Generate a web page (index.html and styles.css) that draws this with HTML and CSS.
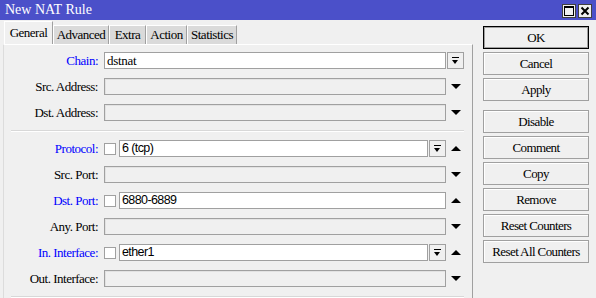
FILE: index.html
```html
<!DOCTYPE html>
<html lang="en">

<head>
    <meta charset="UTF-8">
    <title>New NAT Rule</title>
    <link rel="stylesheet" href="styles.css">
</head>

<body>
    <div class="window">
        <div class="titlebar">
            <span class="title">New NAT Rule</span>
            <div class="title-buttons">
                <span class="tbtn">
                    <svg width="12" height="12" viewBox="0 0 12 12"><rect x="1.5" y="1.5" width="9" height="9" fill="none" stroke="#000" stroke-width="1"/><rect x="1" y="1" width="10" height="2" fill="#000"/></svg>
                </span>
                <span class="tbtn">
                    <svg width="12" height="12" viewBox="0 0 12 12"><path d="M2.5 2.5 L9.5 9.5 M9.5 2.5 L2.5 9.5" stroke="#000" stroke-width="2"/></svg>
                </span>
            </div>
        </div>

        <div class="body">
            <div class="left">
                <div class="tabs">
                    <span class="tab active" style="width: 49px">General</span>
                    <span class="tab" style="width: 56px">Advanced</span>
                    <span class="tab" style="width: 37px">Extra</span>
                    <span class="tab" style="width: 41px">Action</span>
                    <span class="tab" style="width: 50px">Statistics</span>
                </div>

                <div class="panel">
                    <div class="row">
                        <label class="lbl blue">Chain:</label>
                        <div class="field">
                            <div class="input serif">dstnat</div>
                        </div>
                        <div class="trail"><span class="dd"></span></div>
                    </div>
                    <div class="row">
                        <label class="lbl">Src. Address:</label>
                        <div class="field"><div class="input off"></div></div>
                        <div class="trail"><span class="arrow down"></span></div>
                    </div>
                    <div class="row">
                        <label class="lbl">Dst. Address:</label>
                        <div class="field"><div class="input off"></div></div>
                        <div class="trail"><span class="arrow down"></span></div>
                    </div>

                    <div class="sep"></div>

                    <div class="row">
                        <label class="lbl blue">Protocol:</label>
                        <div class="field">
                            <span class="check"></span>
                            <div class="input">6 (tcp)</div>
                            <span class="dd"></span>
                        </div>
                        <div class="trail"><span class="arrow up"></span></div>
                    </div>
                    <div class="row">
                        <label class="lbl">Src. Port:</label>
                        <div class="field"><div class="input off"></div></div>
                        <div class="trail"><span class="arrow down"></span></div>
                    </div>
                    <div class="row">
                        <label class="lbl blue">Dst. Port:</label>
                        <div class="field">
                            <span class="check"></span>
                            <div class="input">6880-6889</div>
                        </div>
                        <div class="trail"><span class="arrow up"></span></div>
                    </div>
                    <div class="row">
                        <label class="lbl">Any. Port:</label>
                        <div class="field"><div class="input off"></div></div>
                        <div class="trail"><span class="arrow down"></span></div>
                    </div>
                    <div class="row">
                        <label class="lbl blue">In. Interface:</label>
                        <div class="field">
                            <span class="check"></span>
                            <div class="input">ether1</div>
                            <span class="dd"></span>
                        </div>
                        <div class="trail"><span class="arrow up"></span></div>
                    </div>
                    <div class="row">
                        <label class="lbl">Out. Interface:</label>
                        <div class="field"><div class="input off"></div></div>
                        <div class="trail"><span class="arrow down"></span></div>
                    </div>

                    <div class="sep"></div>
                </div>
            </div>

            <div class="buttons">
                <button class="btn default">OK</button>
                <button class="btn">Cancel</button>
                <button class="btn">Apply</button>
                <button class="btn spaced">Disable</button>
                <button class="btn">Comment</button>
                <button class="btn">Copy</button>
                <button class="btn">Remove</button>
                <button class="btn">Reset Counters</button>
                <button class="btn">Reset All Counters</button>
            </div>
        </div>
    </div>
</body>

</html>
```

FILE: styles.css
```css
body {
    margin: 0;
    background: #f0f0f0;
    font-family: 'Liberation Serif', serif;
    font-size: 13px;
    color: #000;
}

.window {
    width: 596px;
    height: 298px;
    overflow: hidden;
}

.titlebar {
    height: 20px;
    background: #4b50c9;
    display: flex;
    align-items: center;
    justify-content: space-between;
    padding: 0 4px 0 5px;
}

.title {
    color: #fff;
    font-size: 14px;
}

.title-buttons {
    display: flex;
    gap: 2px;
    margin-top: 1px;
}

.tbtn {
    width: 12px;
    height: 12px;
    border: 1px solid #404040;
    background: #f0f0f0;
    display: flex;
}

.body {
    display: flex;
}

.left {
    margin-left: 3px;
    width: 470px;
}

.tabs {
    display: flex;
    align-items: flex-end;
    height: 24px;
    padding-left: 1px;
}

.tab {
    box-sizing: border-box;
    height: 19px;
    line-height: 17px;
    text-align: center;
    background: #dadada;
    border-left: 1px solid #fff;
    border-top: 1px solid #fff;
    border-right: 1px solid #a0a0a0;
    letter-spacing: -0.5px;
}

.tab.active {
    height: 23px;
    line-height: 22px;
    background: #f0f0f0;
}

.panel {
    box-sizing: border-box;
    height: 254px;
    border-top: 1px solid #fff;
    border-left: 1px solid #dcdcdc;
    border-right: 1px solid #a0a0a0;
    padding-top: 7px;
    display: flex;
    flex-direction: column;
    gap: 9px;
}

.row {
    display: flex;
    height: 17px;
    align-items: center;
}

.lbl {
    width: 94px;
    margin-right: 6px;
    text-align: right;
    letter-spacing: -0.5px;
    line-height: 17px;
}

.blue {
    color: #0000ff;
}

.field {
    width: 342px;
    height: 17px;
    display: flex;
    align-items: center;
}

.input {
    flex: 1;
    box-sizing: border-box;
    height: 17px;
    border: 1px solid #a0a0a0;
    background: #fff;
    padding-left: 2px;
    line-height: 15px;
    font-family: 'Liberation Sans', sans-serif;
    font-size: 12.5px;
    letter-spacing: -0.6px;
}

.input.serif {
    font-family: 'Liberation Serif', serif;
    font-size: 13px;
    letter-spacing: -0.3px;
}

.input.off {
    background: #f0f0f0;
    box-shadow: inset 1px 1px 0 #e2e2e2;
}

.check {
    box-sizing: border-box;
    width: 12px;
    height: 12px;
    border: 1px solid #a0a0a0;
    background: #fff;
    margin-right: 3px;
}

.dd {
    box-sizing: border-box;
    width: 17px;
    height: 17px;
    margin-left: 1px;
    border: 1px solid #a0a0a0;
    background: #f0f0f0;
    position: relative;
}

.dd::before {
    content: "";
    position: absolute;
    left: 4px;
    top: 4px;
    width: 7px;
    height: 1px;
    background: #000;
}

.dd::after {
    content: "";
    position: absolute;
    left: 4px;
    top: 7px;
    border-left: 3.5px solid transparent;
    border-right: 3.5px solid transparent;
    border-top: 4px solid #000;
}

.trail {
    width: 19px;
    display: flex;
    align-items: center;
}

.arrow {
    margin-left: 5px;
    border-left: 5px solid transparent;
    border-right: 5px solid transparent;
}

.arrow.down {
    border-top: 5px solid #000;
}

.arrow.up {
    border-bottom: 5px solid #000;
}

.sep {
    margin-left: 7px;
    width: 453px;
    height: 1px;
    background: #d8d8d8;
    box-shadow: 0 1px 0 #fff;
}

.buttons {
    margin-left: 10px;
    padding-top: 6px;
    display: flex;
    flex-direction: column;
    gap: 3px;
}

.btn {
    width: 106px;
    height: 23px;
    padding: 0;
    background: #f0f0f0;
    border: 1px solid #a0a0a0;
    box-shadow: inset 1px 1px 0 #fff;
    font-family: 'Liberation Serif', serif;
    font-size: 13px;
    letter-spacing: -0.6px;
    color: #000;
}

.btn.default {
    border: 1px solid #000;
    box-shadow: inset 0 0 0 1px #a0a0a0;
}

.btn.spaced {
    margin-top: 6px;
}
```
